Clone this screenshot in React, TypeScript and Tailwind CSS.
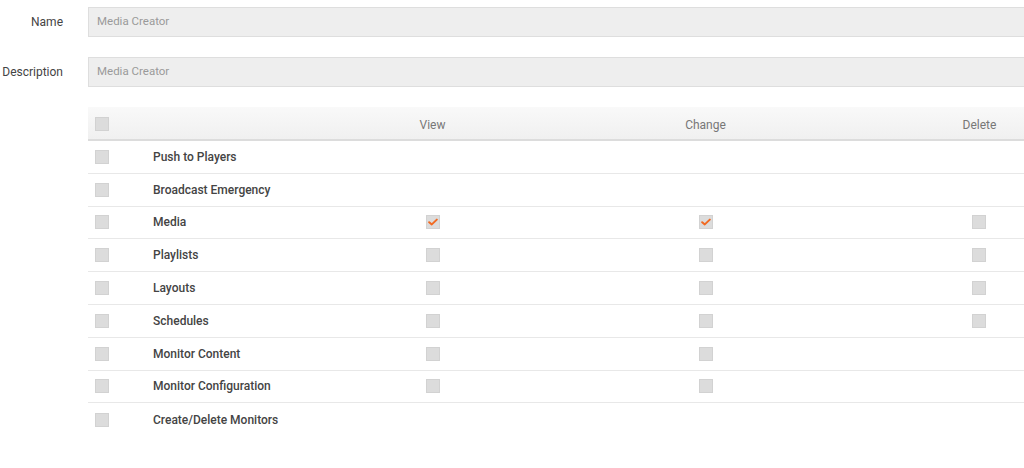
import React from "react";

type Perm = { label: string; view?: boolean | null; change?: boolean | null; del?: boolean | null };

// null = no checkbox in that cell
const PERMS: Perm[] = [
  { label: "Push to Players", view: null, change: null, del: null },
  { label: "Broadcast Emergency", view: null, change: null, del: null },
  { label: "Media", view: true, change: true, del: false },
  { label: "Playlists", view: false, change: false, del: false },
  { label: "Layouts", view: false, change: false, del: false },
  { label: "Schedules", view: false, change: false, del: false },
  { label: "Monitor Content", view: false, change: false, del: null },
  { label: "Monitor Configuration", view: false, change: false, del: null },
  { label: "Create/Delete Monitors", view: null, change: null, del: null },
];

function Box({ checked }: { checked?: boolean }) {
  return (
    <span className="flex h-[14px] w-[14px] items-center justify-center border border-[#d2d2d2] bg-[#dcdcdc]">
      {checked && (
        <svg width="10" height="8" viewBox="0 0 10 8">
          <path d="M1.2 4.2 L3.8 6.4 L8.8 1.6" fill="none" stroke="#f26a22" strokeWidth="2" strokeLinecap="round" strokeLinejoin="round" />
        </svg>
      )}
    </span>
  );
}

function Cell({ v }: { v?: boolean | null }) {
  return <div className="flex items-center justify-center">{v === null || v === undefined ? null : <Box checked={v} />}</div>;
}

function Field({ label, value }: { label: string; value: string }) {
  return (
    <div className="flex items-center">
      <div className="w-[64px] pr-[1px] text-right text-[12px] text-[#444]">{label}</div>
      <div className="ml-[24px] flex h-[30px] w-[1030px] items-center border border-[#dedede] bg-[#eeeeee] pl-[8px] text-[11.5px] text-[#9a9a9a]">
        {value}
      </div>
    </div>
  );
}

export default function App() {
  return (
    <div className="h-[468px] w-[1024px] overflow-hidden bg-white" style={{ fontFamily: "Roboto, 'Liberation Sans', sans-serif" }}>
      <div className="w-[1200px] pt-[7px]">
        <div className="flex flex-col gap-[20px]">
          <Field label="Name" value="Media Creator" />
          <Field label="Description" value="Media Creator" />
        </div>

        <div className="ml-[88px] mt-[20px] w-[1030px]">
          <div className="grid h-[34px] grid-cols-[65px_143px_273px_273px_273px] items-center border-b-2 border-[#dcdcdc] bg-gradient-to-b from-[#f9f9f9] to-[#f0f0f0] text-[12px] text-[#777]">
            <div className="pl-[7px] pt-[1px]">
              <Box />
            </div>
            <div />
            <div className="pt-[3px] text-center">View</div>
            <div className="pt-[3px] text-center">Change</div>
            <div className="pl-[2px] pt-[3px] text-center">Delete</div>
          </div>

          {PERMS.map((p, i) => (
            <div
              key={p.label}
              className={`grid h-[32.8px] grid-cols-[65px_143px_273px_273px_273px] items-center ${
                i < PERMS.length - 1 ? "border-b border-[#e8e8e8]" : ""
              }`}
            >
              <div className="pl-[7px]">
                <Box />
              </div>
              <div className="whitespace-nowrap text-[12px] font-medium text-[#444]">{p.label}</div>
              <Cell v={p.view} />
              <Cell v={p.change} />
              <Cell v={p.del} />
            </div>
          ))}
        </div>
      </div>
    </div>
  );
}
